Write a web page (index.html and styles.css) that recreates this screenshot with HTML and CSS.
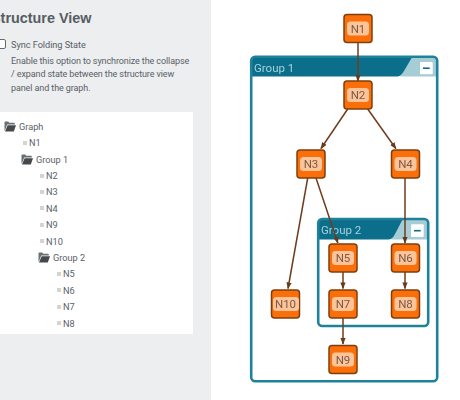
FILE: index.html
```html
<!DOCTYPE html>
<html lang="en">
<head>
<meta charset="utf-8">
<title>Structure View</title>
<link rel="stylesheet" href="styles.css">
</head>
<body>
<svg class="defs" width="0" height="0">
  <defs>
    <symbol id="folder" viewBox="0 0 12 11">
      <path d="M0.5 9.5V1.6C0.5 1 1 .6 1.5 .6H4.2L5.2 1.8H10C10.5 1.8 10.8 2.1 10.8 2.6V3.4H3.2L.9 9.5Z" fill="#6a6f72"/>
      <path d="M1 10.4L3.6 4.2H12L9.8 10.4Z" fill="#45494c"/>
    </symbol>
    <marker id="arrow" viewBox="0 0 8 6" markerWidth="7" markerHeight="5.2" refX="7" refY="3" orient="auto" markerUnits="userSpaceOnUse">
      <path d="M0 0L8 3L0 6Z" fill="#693a18"/>
    </marker>
  </defs>
</svg>
<div class="page">
  <aside class="sidebar">
    <h1 class="title">Structure View</h1>
    <label class="check"><input type="checkbox" class="check-box"><span>Sync Folding State</span></label>
    <p class="hint">Enable this option to synchronize the collapse / expand state between the structure view panel and the graph.</p>
    <div class="tree">
      <ul class="level root">
        <li>
          <div class="row"><svg class="folder"><use href="#folder"/></svg>Graph</div>
          <ul class="level">
            <li><div class="row"><i class="leaf"></i>N1</div></li>
            <li>
              <div class="row"><svg class="folder"><use href="#folder"/></svg>Group 1</div>
              <ul class="level">
                <li><div class="row"><i class="leaf"></i>N2</div></li>
                <li><div class="row"><i class="leaf"></i>N3</div></li>
                <li><div class="row"><i class="leaf"></i>N4</div></li>
                <li><div class="row"><i class="leaf"></i>N9</div></li>
                <li><div class="row"><i class="leaf"></i>N10</div></li>
                <li>
                  <div class="row"><svg class="folder"><use href="#folder"/></svg>Group 2</div>
                  <ul class="level">
                    <li><div class="row"><i class="leaf"></i>N5</div></li>
                    <li><div class="row"><i class="leaf"></i>N6</div></li>
                    <li><div class="row"><i class="leaf"></i>N7</div></li>
                    <li><div class="row"><i class="leaf"></i>N8</div></li>
                  </ul>
                </li>
              </ul>
            </li>
          </ul>
        </li>
      </ul>
    </div>
  </aside>
  <main class="canvas">
    <svg class="graph" width="249" height="400" viewBox="211 0 249 400">
      <g>
        <rect class="group-body" x="251.2" y="56.7" width="186" height="324.6" rx="4"/>
        <path class="group-tab" d="M412 57.5H433.5Q436.5 57.5 436.5 60.5V76.5H400Z"/>
        <path class="group-head" d="M252 76.5V60.5Q252 57.5 255 57.5H412L404 71Q401 76.5 397 76.5Z"/>
        <rect class="group-line" x="251.2" y="56.7" width="186" height="324.6" rx="4"/>
        <text class="group-label" x="254" y="71.5">Group 1</text>
        <rect class="toggle" x="420" y="62" width="12.7" height="12.3" rx="1"/>
        <rect class="minus" x="423" y="67.4" width="6.7" height="1.6"/>
      </g>
      <g>
        <rect class="group-body" x="318.2" y="219" width="110" height="107" rx="4"/>
        <path class="group-tab" d="M402.500 219.800H424.500Q427.500 219.800 427.500 222.800V239.500H391Z"/>
        <path class="group-head" d="M319 239.500V222.800Q319 219.800 322 219.800H402.500L395 234Q392.500 239.500 388 239.500Z"/>
        <rect class="group-line" x="318.2" y="219" width="110" height="107" rx="4"/>
        <text class="group-label" x="321" y="234">Group 2</text>
        <rect class="toggle" x="411" y="224.300" width="12.700" height="12.700" rx="1"/>
        <rect class="minus" x="414" y="229.900" width="6.700" height="1.600"/>
      </g>
      <g class="edges">
        <path d="M358 43V81"/>
        <path d="M347.700 109L321 148.500"/>
        <path d="M367.700 109L395.800 148.500"/>
        <path d="M307.700 178L288 288.500"/>
        <path d="M316 178L337.800 243"/>
        <path d="M405 178V243"/>
        <path d="M343 272V288.500"/>
        <path d="M405 272V288.500"/>
        <path d="M343 318V344"/>
      </g>
      <g class="node"><rect class="node-box" x="344" y="14.500" width="28" height="28" rx="3"/><rect class="node-label" x="347" y="21.500" width="22" height="14" rx="3.500"/><text x="358" y="32.700">N1</text></g>
      <g class="node"><rect class="node-box" x="344" y="81" width="28" height="28" rx="3"/><rect class="node-label" x="347" y="88" width="22" height="14" rx="3.500"/><text x="358" y="99.200">N2</text></g>
      <g class="node"><rect class="node-box" x="297" y="150" width="28" height="28" rx="3"/><rect class="node-label" x="300" y="157" width="22" height="14" rx="3.500"/><text x="311" y="168.200">N3</text></g>
      <g class="node"><rect class="node-box" x="391.500" y="150" width="28" height="28" rx="3"/><rect class="node-label" x="394.500" y="157" width="22" height="14" rx="3.500"/><text x="405.500" y="168.200">N4</text></g>
      <g class="node"><rect class="node-box" x="329" y="244" width="28" height="28" rx="3"/><rect class="node-label" x="332" y="251" width="22" height="14" rx="3.500"/><text x="343" y="262.200">N5</text></g>
      <g class="node"><rect class="node-box" x="391.500" y="244" width="28" height="28" rx="3"/><rect class="node-label" x="394.500" y="251" width="22" height="14" rx="3.500"/><text x="405.500" y="262.200">N6</text></g>
      <g class="node"><rect class="node-box" x="329" y="290" width="28" height="28" rx="3"/><rect class="node-label" x="332" y="297" width="22" height="14" rx="3.500"/><text x="343" y="308.200">N7</text></g>
      <g class="node"><rect class="node-box" x="391.500" y="290" width="28" height="28" rx="3"/><rect class="node-label" x="394.500" y="297" width="22" height="14" rx="3.500"/><text x="405.500" y="308.200">N8</text></g>
      <g class="node"><rect class="node-box" x="271.500" y="290" width="28" height="28" rx="3"/><rect class="node-label" x="273" y="297" width="26" height="14" rx="3.500"/><text x="285.500" y="308.200">N10</text></g>
      <g class="node"><rect class="node-box" x="329" y="345.500" width="28" height="28" rx="3"/><rect class="node-label" x="332" y="352.500" width="22" height="14" rx="3.500"/><text x="343" y="363.700">N9</text></g>
    </svg>
  </main>
</div>
</body>
</html>
```
FILE: styles.css
```css
html, body {
  margin: 0;
  padding: 0;
  height: 100%;
  overflow: hidden;
  background: #fff;
}
body {
  font-family: Roboto, "Liberation Sans", sans-serif;
  color: #596066;
}
.defs {
  display: block;
  height: 0;
}
.page {
  display: flex;
  height: 400px;
  width: 460px;
  filter: blur(0.3px);
}
.sidebar {
  flex: none;
  width: 211px;
  height: 400px;
  background: #eceef0;
  overflow: hidden;
  box-sizing: border-box;
  padding-top: 9px;
}
.title {
  margin: 0 0 0 -9px;
  font-family: "Liberation Sans", sans-serif;
  font-size: 14.400px;
  line-height: 18px;
  font-weight: 700;
  color: #565d63;
  white-space: nowrap;
}
.check {
  display: flex;
  align-items: center;
  margin: 8px 0 0 -5px;
  height: 18px;
  font-size: 9.200px;
  letter-spacing: -0.05px;
}
.check-box {
  appearance: none;
  box-sizing: border-box;
  width: 11px;
  height: 10px;
  margin: 0 5px 0 0;
  border: 1px solid #666b70;
  border-radius: 2px;
  background: #fff;
  flex: none;
}
.hint {
  margin: 2px 0 0 11px;
  width: 182px;
  font-size: 9px;
  letter-spacing: -0.1px;
  line-height: 13.400px;
}
.tree {
  width: 193px;
  margin-top: 17px;
  padding: 6px 0 3px;
  background: #fff;
  box-sizing: border-box;
  font-size: 9.200px;
  color: #5c6166;
}
.level {
  list-style: none;
  margin: 0;
  padding: 0 0 0 17px;
}
.root {
  padding-left: 4px;
}
.row {
  display: flex;
  align-items: center;
  height: 16.400px;
  white-space: nowrap;
}
.folder {
  width: 12px;
  height: 11px;
  margin-right: 3px;
  flex: none;
}
.leaf {
  width: 4px;
  height: 4px;
  margin: 0 2px 0 2px;
  background: #d2d4d6;
  flex: none;
}
.canvas {
  flex: 1;
  min-width: 0;
}
.graph {
  display: block;
}
.group-body {
  fill: #fff;
}
.group-line {
  fill: none;
  stroke: #1f829b;
  stroke-width: 2.600;
}
.group-head {
  fill: #0b6f8c;
}
.group-tab {
  fill: #a6ccd5;
}
.group-label {
  font-family: Roboto, "Liberation Sans", sans-serif;
  font-size: 11.500px;
  fill: #a8d0dc;
}
.toggle {
  fill: #fff;
}
.minus {
  fill: #0b6f8c;
}
.edges path {
  fill: none;
  stroke: #6f3d1c;
  stroke-width: 1.500;
  marker-end: url(#arrow);
}
.node-box {
  fill: #fb6f0a;
  stroke: #7f3f0c;
  stroke-width: 1.500;
}
.node-label {
  fill: #fdc49a;
}
.node text {
  font-family: Roboto, "Liberation Sans", sans-serif;
  font-size: 11.500px;
  fill: #7a5a48;
  text-anchor: middle;
}
```
